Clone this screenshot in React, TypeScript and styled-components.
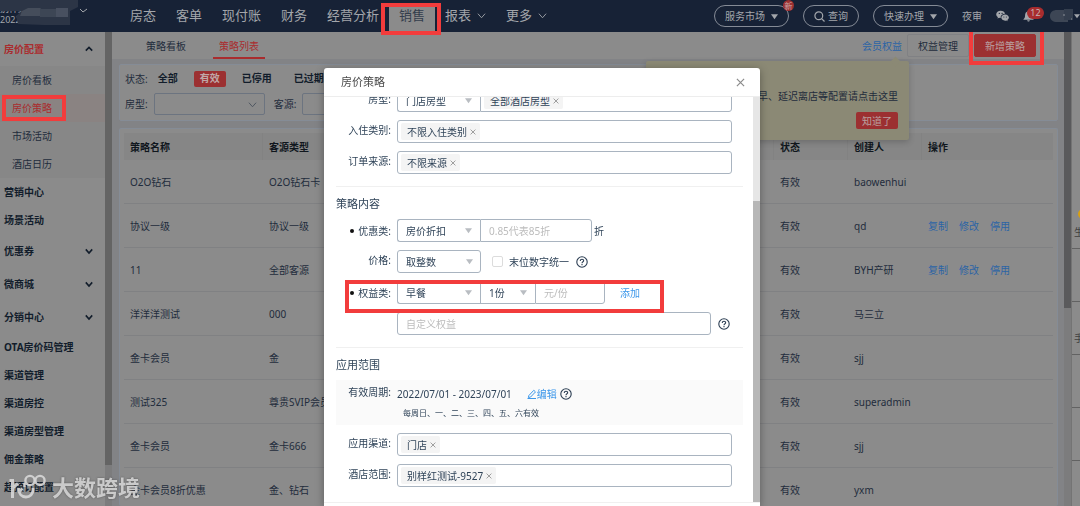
import React from 'react';
import styled, { createGlobalStyle, css } from 'styled-components';

const c = {
  surface: '#8b8b8b',
  canvas: '#828386',
  navy: '#172236',
  navText: '#a3a6ab',
  ink: '#1f2c3c',
  inkStrong: '#121d2b',
  red: '#9c3031',
  redText: '#a92c2e',
  link: '#2b64a6',
  mark: '#f23c3c',
  popover: '#8b8975',
  formInk: '#2f4358',
  formLine: '#a9b4c0',
  formLink: '#3c97ea',
  hint: '#bcbcbc',
};

const GlobalStyle = createGlobalStyle`
  *, *::before, *::after { box-sizing: border-box; }
  html, body, #root { height: 100%; }
  body {
    margin: 0;
    overflow: hidden;
    background: ${c.canvas};
    color: ${c.ink};
    font: 10px/16px "Noto Sans", "Noto Sans CJK SC", sans-serif;
  }
  button, input, select { font: inherit; color: inherit; margin: 0; }
  button { cursor: pointer; }
  a { text-decoration: none; color: inherit; }
`;

const Page = styled.div`
  display: flex;
  flex-direction: column;
  height: 100vh;
`;

const Highlight = styled.span<{ $inset: string }>`
  position: absolute;
  inset: ${(p) => p.$inset};
  border: 4px solid ${c.mark};
  pointer-events: none;
  z-index: 5;
`;

/* ---------- top bar ---------- */

const TopBar = styled.header`
  display: flex;
  flex: none;
  height: 32px;
  background: ${c.navy};
  color: ${c.navText};
`;

const Account = styled.div`
  position: relative;
  width: 120px;
  padding-top: 3px;
  font-size: 9px;
  line-height: 11px;
  overflow: hidden;
  svg { position: absolute; left: 0; top: 0; }
`;

const Nav = styled.nav`
  display: flex;
  align-items: flex-end;
  font-size: 13px;
`;

const NavItem = styled.a<{ $active?: boolean }>`
  position: relative;
  display: flex;
  align-items: center;
  gap: 6px;
  height: 26px;
  padding: 0 10px 8px;
  line-height: 18px;
  ${(p) => p.$active && css`background: ${c.surface}; color: #333d4b;`}
`;

const Tools = styled.div`
  display: flex;
  align-items: center;
  margin-left: auto;
`;

const Pill = styled.button<{ $tight?: boolean }>`
  position: relative;
  display: flex;
  align-items: center;
  gap: ${(p) => (p.$tight ? 3 : 6)}px;
  height: 22px;
  margin-right: 14px;
  padding: 0 10px;
  border: 1px solid #858b96;
  border-radius: 11px;
  background: none;
`;

const NewBadge = styled.span`
  position: absolute;
  right: -6px;
  top: -6px;
  width: 11px;
  height: 11px;
  border-radius: 50%;
  background: ${c.red};
  color: #c9a5a5;
  font-size: 8px;
  line-height: 11px;
  text-align: center;
`;

const ToolButton = styled.button<{ $last?: boolean }>`
  position: relative;
  display: flex;
  align-items: center;
  padding: 0;
  border: 0;
  background: none;
  margin-right: ${(p) => (p.$last ? 16 : 14)}px;
`;

const Count = styled.span`
  position: absolute;
  left: 4px;
  top: -3px;
  width: 17px;
  height: 12px;
  border-radius: 6px;
  background: #a82c2e;
  color: #c7b3b3;
  font-size: 9px;
  line-height: 12px;
  text-align: center;
`;

/* ---------- frame ---------- */

const Frame = styled.div`
  display: grid;
  grid-template-columns: 105px 7px minmax(0, 1fr) 7px 9px;
  flex: 1;
  min-height: 0;
`;

const Rail = styled.div<{ $thumb: string; $color: string }>`
  background: #7c7c7d;
  &::before {
    content: '';
    display: block;
    height: ${(p) => p.$thumb};
    background: ${(p) => p.$color};
  }
`;

const Side = styled.aside`
  overflow: hidden;
  background: ${c.surface};
`;

const SideLink = styled.a<{ $tall?: boolean; $open?: boolean }>`
  display: flex;
  align-items: center;
  justify-content: space-between;
  height: ${(p) => (p.$open ? 34 : p.$tall ? 33 : 28)}px;
  padding: 0 12px 0 4px;
  font-weight: 700;
  color: ${(p) => (p.$open ? c.redText : c.inkStrong)};
  svg { color: ${c.inkStrong}; }
`;

const SubMenu = styled.div`
  background: #878787;
`;

const SubLink = styled.a<{ $active?: boolean }>`
  position: relative;
  display: flex;
  align-items: center;
  height: 28px;
  padding-left: 12px;
  ${(p) => p.$active && css`color: ${c.redText}; background: #8a8382;`}
`;

const Main = styled.main`
  display: flex;
  flex-direction: column;
  min-width: 0;
  overflow: hidden;
`;

const TabBar = styled.div`
  display: flex;
  align-items: center;
  flex: none;
  height: 27px;
  padding: 0 28px;
  background: ${c.surface};
`;

const Tab = styled.a<{ $active?: boolean }>`
  height: 27px;
  margin-right: 21px;
  padding: 0 6px;
  line-height: 28px;
  border-bottom: 2px solid transparent;
  ${(p) => p.$active && css`color: ${c.redText}; border-color: ${c.redText};`}
`;

const Actions = styled.div`
  position: relative;
  display: flex;
  align-items: center;
  gap: 5px;
  margin-left: auto;
`;

const Action = styled.button<{ $primary?: boolean }>`
  position: relative;
  height: 23px;
  padding: 0 10px;
  border: 1px solid ${(p) => (p.$primary ? c.red : '#808184')};
  border-radius: 2px;
  background: ${(p) => (p.$primary ? c.red : 'none')};
  color: ${(p) => (p.$primary ? '#b9a0a0' : c.ink)};
`;

const MemberLink = styled.a`
  color: ${c.link};
`;

const Popover = styled.div`
  position: absolute;
  right: 127px;
  top: 27px;
  display: flex;
  flex-direction: column;
  align-items: flex-end;
  justify-content: flex-end;
  gap: 8px;
  width: 263px;
  height: 79px;
  padding: 11px;
  border-radius: 2px;
  background: ${c.popover};
  box-shadow: 0 2px 6px rgba(0, 0, 0, 0.2);
  z-index: 2;
  &::before {
    content: '';
    position: absolute;
    right: 10px;
    top: -3px;
    width: 7px;
    height: 7px;
    background: ${c.popover};
    transform: rotate(45deg);
  }
`;

const Confirm = styled.button`
  height: 17px;
  padding: 0 6px;
  border: 0;
  border-radius: 2px;
  background: ${c.red};
  color: #b9a0a0;
  line-height: 16px;
`;

const Card = styled.section`
  margin: 0 6px 7px 7px;
  border: 1px solid #858c96;
  border-radius: 2px;
  background: ${c.surface};
`;

const Filters = styled(Card)`
  flex: none;
  margin-top: 5px;
  padding: 5px;
`;

const FilterRow = styled.div`
  display: flex;
  align-items: center;
  height: 17px;
  margin-bottom: 6px;
  & + & { height: 22px; margin-bottom: 0; }
`;

const StatusGroup = styled.div`
  display: flex;
  gap: 5px;
  margin-left: 4px;
`;

const Status = styled.button<{ $active?: boolean }>`
  height: 16px;
  margin-right: 5px;
  padding: 0 6px;
  border: 0;
  border-radius: 2px;
  background: ${(p) => (p.$active ? c.red : 'none')};
  color: ${(p) => (p.$active ? '#c0a8a8' : c.inkStrong)};
  font-weight: 700;
  line-height: 15px;
`;

const FilterLabel = styled.label`
  display: flex;
  align-items: center;
  gap: 6px;
  margin-right: 9px;
`;

const Picker = styled.span`
  display: flex;
  align-items: center;
  width: 111px;
  color: #4a525e;
  select {
    flex: 1;
    min-width: 0;
    height: 22px;
    padding: 0 8px;
    border: 1px solid #6c7480;
    border-radius: 2px;
    background: none;
    appearance: none;
  }
  svg { flex: none; margin-left: -17px; margin-right: 8px; pointer-events: none; }
`;

const TableCard = styled(Card)`
  flex: 1;
  min-height: 0;
  margin-bottom: 0;
  padding: 4px;
  border-bottom: 0;
  overflow: hidden;
`;

const Table = styled.table`
  width: 100%;
  table-layout: fixed;
  border-collapse: separate;
  border-spacing: 0;
  th, td { padding: 0 6px; text-align: left; white-space: nowrap; }
  th { height: 27px; background: #868686; border-right: 1px solid #828282; color: #10161d; font-weight: 700; }
  th:last-child { border-right: 0; }
  td { height: 44px; border-bottom: 1px solid #808183; }
`;

const Operations = styled.span`
  display: flex;
  gap: 11px;
  a { color: ${c.link}; }
`;

const Strip = styled.div`
  overflow: hidden;
  border-left: 1px solid #747474;
  background: ${c.surface};
  color: #3f3f3f;
`;

const StripCell = styled.div<{ $first?: boolean }>`
  display: flex;
  flex-direction: column;
  justify-content: ${(p) => (p.$first ? 'flex-end' : 'center')};
  gap: 5px;
  height: ${(p) => (p.$first ? 217 : 53)}px;
  padding: ${(p) => (p.$first ? '0 0 8px 2px' : '20px 0 0 2px')};
  border-bottom: 1px solid #626262;
  svg { margin-left: 4px; }
`;

/* ---------- dialog ---------- */

const Overlay = styled.div`
  position: fixed;
  inset: 68px 0 0;
  display: flex;
  justify-content: center;
  padding-left: 4px;
  pointer-events: none;
  z-index: 4;
`;

const Dialog = styled.div`
  display: flex;
  flex-direction: column;
  width: 436px;
  border-radius: 3px 3px 0 0;
  background: #fff;
  color: ${c.formInk};
  box-shadow: 0 2px 8px rgba(0, 0, 0, 0.35);
  pointer-events: auto;
`;

const DialogHead = styled.div`
  display: flex;
  flex: none;
  align-items: center;
  justify-content: space-between;
  height: 29px;
  padding: 0 15px 0 17px;
  border-bottom: 1px solid #ededed;
  color: #4a4a4a;
  h2 { margin: 0; font-size: 11px; font-weight: 400; }
`;

const Bare = styled.button`
  display: inline-flex;
  align-items: center;
  padding: 0;
  border: 0;
  background: none;
`;

const DialogBody = styled.div`
  display: grid;
  grid-template-columns: minmax(0, 1fr) 7px;
  flex: 1;
  min-height: 0;
  overflow: hidden;
`;

const DialogRail = styled.div`
  padding-top: 104px;
  background: #e6e6e6;
  &::before { content: ''; display: block; height: 100%; background: #b7b7b7; }
`;

const DialogFoot = styled.div`
  flex: none;
  height: 4px;
  border-top: 1px solid #f0f0f0;
`;

const Form = styled.form`
  margin-top: -8px;
  padding: 0 10px 0 12px;
`;

const Group = styled.fieldset`
  display: flex;
  flex-direction: column;
  gap: 8px;
  min-width: 0;
  margin: 0;
  padding: 0 0 12px;
  border: 0;
  & + & { border-top: 1px solid #f0f0f0; }
`;

const GroupTitle = styled.h3`
  margin: 9px 0 -1px;
  font-size: 11px;
  font-weight: 400;
  line-height: 16px;
`;

const Line = styled.div`
  position: relative;
  display: grid;
  grid-template-columns: 55px minmax(0, 1fr);
  column-gap: 6px;
  height: 23px;
  padding-right: 11px;
`;

const Label = styled.label<{ $dot?: boolean }>`
  display: flex;
  align-items: center;
  justify-content: flex-end;
  gap: 4px;
  line-height: 18px;
  padding-bottom: 4px;
  ${(p) => p.$dot && css`
    padding-bottom: 0;
    &::before {
      content: '';
      width: 4px;
      height: 4px;
      border-radius: 50%;
      background: #111;
    }
  `}
`;

const Controls = styled.div`
  display: flex;
  align-items: center;
`;

const joined = css<{ $join?: 'left' | 'mid' | 'right' }>`
  border: 1px solid ${c.formLine};
  border-radius: ${(p) =>
    p.$join === 'left' ? '3px 0 0 3px' : p.$join === 'mid' ? '0' : p.$join === 'right' ? '0 3px 3px 0' : '3px'};
`;

const SelectWrap = styled.span<{ $w: number; $join?: 'left' | 'mid' | 'right' }>`
  display: flex;
  flex: none;
  align-items: center;
  width: ${(p) => p.$w}px;
  height: 23px;
  select {
    width: 100%;
    height: 23px;
    padding: 0 8px;
    border: 1px solid ${c.formLine};
    border-right-width: ${(p) => (p.$join ? 0 : 1)}px;
    border-radius: ${(p) => (p.$join === 'left' ? '3px 0 0 3px' : p.$join === 'mid' ? '0' : '3px')};
    background: #fff;
    appearance: none;
  }
  svg { flex: none; margin-left: -15px; margin-right: 8px; pointer-events: none; }
`;

const TextInput = styled.input<{ $w: number; $join?: 'left' | 'mid' | 'right' }>`
  width: ${(p) => p.$w}px;
  height: 23px;
  padding: 0 8px;
  background: #fff;
  ${joined}
  &::placeholder { color: ${c.hint}; opacity: 1; }
`;

const TagBox = styled.div<{ $join?: 'left' | 'mid' | 'right' }>`
  display: flex;
  flex: 1;
  align-items: center;
  height: 23px;
  padding: 0 3px;
  ${joined}
`;

const TagItem = styled.span`
  display: flex;
  align-items: center;
  gap: 3px;
  height: 17px;
  padding: 0 4px 0 6px;
  border-radius: 2px;
  background: #f4f4f4;
`;

const Unit = styled.span`
  margin-left: 2px;
`;

const Check = styled.label`
  display: flex;
  align-items: center;
  gap: 6px;
  margin: 0 7px 0 11px;
  input {
    width: 11px;
    height: 11px;
    border: 1px solid #dcdcdc;
    border-radius: 2px;
    background: #fff;
    appearance: none;
  }
`;

const TextLink = styled.a`
  display: flex;
  align-items: center;
  color: ${c.formLink};
`;

const AddLink = styled(TextLink)`
  margin-left: 15px;
`;

const HelpButton = styled(Bare)<{ $gap?: boolean }>`
  margin-left: ${(p) => (p.$gap ? 7 : 0)}px;
`;

const Period = styled.div`
  height: 45px;
  padding-top: 3px;
  background: #fafafa;
`;

const PeriodLine = styled(Line)`
  height: 22px;
  a { margin: 0 3px 0 15px; }
`;

const PeriodNote = styled.p`
  margin: 0;
  padding-left: 67px;
  font-size: 8px;
  line-height: 16px;
`;

/* ---------- watermark ---------- */

const Watermark = styled.div`
  position: fixed;
  left: 8px;
  bottom: 4px;
  display: flex;
  align-items: center;
  gap: 5px;
  color: rgba(215, 215, 215, 0.9);
  font-size: 22px;
  font-weight: 700;
  line-height: 30px;
  text-shadow: 0 0 2px rgba(70, 70, 70, 0.8);
  z-index: 6;
`;

/* ---------- icons ---------- */

const Chevron = ({ up, size = 9, weight = 1 }: { up?: boolean; size?: number; weight?: number }) => (
  <svg width={size} height={size} viewBox="0 0 10 10" fill="none" stroke="currentColor" strokeWidth={weight}>
    <path d={up ? 'M1 7 5 3 9 7' : 'M1 3 5 7.5 9 3'} />
  </svg>
);

const Caret = ({ color = 'currentColor', size = 7 }: { color?: string; size?: number }) => (
  <svg width={size} height={size} viewBox="0 0 8 8" fill={color}>
    <path d="M0 1.5h8L4 7z" />
  </svg>
);

const Cross = ({ size, color }: { size: number; color: string }) => (
  <svg width={size} height={size} viewBox="0 0 10 10" stroke={color} strokeWidth="1.3">
    <path d="M1 1 9 9M9 1 1 9" />
  </svg>
);

const HelpIcon = () => (
  <svg width="12" height="12" viewBox="0 0 12 12" fill="none" stroke="#2b3d52" strokeWidth="1.1">
    <circle cx="6" cy="6" r="5.2" />
    <path d="M4.3 4.9C4.3 3.8 5 3.2 6 3.2s1.7.6 1.7 1.5C7.7 5.8 6 5.8 6 7.2M6 8.1v1.1" />
  </svg>
);

const EditIcon = () => (
  <svg width="10" height="10" viewBox="0 0 10 10" fill="none" stroke="currentColor">
    <path d="M1.8 6.6 6.8 1.3 8.5 2.9 3.5 8.1 1.4 8.5zM0.5 9.5h8.500" />
  </svg>
);

const SearchIcon = () => (
  <svg width="11" height="11" viewBox="0 0 11 11" fill="none" stroke="currentColor" strokeWidth="1.2">
    <circle cx="4.8" cy="4.8" r="3.9" />
    <path d="M7.6 7.6 10.5 10.5" />
  </svg>
);

const WechatIcon = () => (
  <svg width="13" height="12" viewBox="0 0 13 12" fill="currentColor">
    <path d="M4.700.7C2.200.7.2 2.300.2 4.300c0 1.200.7 2.200 1.700 2.900L1.500 8.600l1.600-.9c.6.200 1 .2 1.600.2C4.400 5.500 6.400 3.700 9.100 3.700 8.700 1.900 6.900.7 4.700.7z" />
    <path d="M12.900 7.600c0-1.700-1.700-3.100-3.800-3.100S5.300 5.900 5.300 7.600s1.700 3.100 3.800 3.100c.5 0 .9-.1 1.300-.2l1.300.8-.4-1.300c1-.6 1.600-1.400 1.600-2.400z" />
    <g fill={c.navy}>
      <circle cx="3.3" cy="3.4" r=".6" />
      <circle cx="6.1" cy="3.4" r=".6" />
      <circle cx="7.9" cy="6.9" r=".5" />
      <circle cx="10.3" cy="6.9" r=".5" />
    </g>
  </svg>
);

const BellIcon = () => (
  <svg width="11" height="12" viewBox="0 0 11 12" fill="currentColor">
    <path d="M5.500 0.500c.6 0 .9.400.9.900 1.700.5 2.500 1.900 2.500 3.600 0 2.500.6 3.500 1.600 4.200v.5H.5v-.5C1.500 8.500 2.100 7.500 2.100 5c0-1.700.8-3.100 2.500-3.600 0-.5.3-.9.9-.9zM4.200 10.300h2.600c0 .8-.6 1.300-1.300 1.300s-1.300-.5-1.300-1.300z" />
  </svg>
);

const AccountMask = () => (
  <svg width="90" height="26" viewBox="0 0 90 26">
    <path d="M0 0h78v7l-8 4v14H44l-26-1-2-8 6-5H0z" fill="#2c3546" />
    <path d="M28 8h12l4 3v5H20l2-5z" fill="#454d5b" />
    <path d="M56 8h12v9H56z" fill="#485060" />
    <path d="M40 9h16v8H40z" fill="#3d4655" />
    <path d="M80 9l3 3 4-3" fill="none" stroke={c.navText} />
  </svg>
);

const UserMask = () => (
  <svg width="24" height="16" viewBox="0 0 24 16">
    <path d="M0 8C0 4 3 2 7 2h11v12H7C3 14 0 12 0 8z" fill="#3d4655" />
    <path d="M14 1h9v11h-9z" fill="#343e4e" />
    <path d="M13 7h2M21 11h1" stroke="#8a8f98" />
  </svg>
);

const Logo = () => (
  <svg width="39" height="26" viewBox="0 0 39 26" fill="none" stroke="currentColor">
    <path d="M1.500 6.500h3v17.500M4.500 14l5.500-4.500" strokeWidth="3" />
    <path d="M10.500 14c0 6 3.500 9 7.500 9s7-3 7-7v-2M10.500 18l4-3.500" strokeWidth="2.800" />
    <circle cx="22" cy="6.500" r="4.600" strokeWidth="2.400" />
    <circle cx="32" cy="6.500" r="4.600" strokeWidth="2.400" />
    <path d="M16.500 9v4" strokeWidth="2.400" />
  </svg>
);

/* ---------- data ---------- */

const rows = [
  { name: 'O2O钻石', source: 'O2O钻石卡', by: 'baowenhui' },
  { name: '协议一级', source: '协议一级', by: 'qd', ops: true },
  { name: '11', source: '全部客源', by: 'BYH产研', ops: true },
  { name: '洋洋洋测试', source: '000', by: '马三立' },
  { name: '金卡会员', source: '金', by: 'sjj' },
  { name: '测试325', source: '尊贵SVIP会员', by: 'superadmin' },
  { name: '金卡会员', source: '金卡666', by: 'sjj' },
  { name: '金卡会员8折优惠', source: '金、钻石', by: 'yxm' },
];

const sideGroups = ['优惠券', '微商城', '分销中心'];
const sidePages = ['OTA房价码管理', '渠道管理', '渠道房控', '渠道房型管理', '佣金策略', '超预订配置'];

/* ---------- parts ---------- */

type Join = 'left' | 'mid' | 'right';

const SelectBox = ({ id, value, w, join, label }: { id?: string; value: string; w: number; join?: Join; label?: string }) => (
  <SelectWrap $w={w} $join={join}>
    <select id={id} aria-label={label} defaultValue={value}>
      <option>{value}</option>
    </select>
    <Caret color="#b9bdc2" />
  </SelectWrap>
);

const Tag = ({ text }: { text: string }) => (
  <TagItem>
    {text}
    <Bare type="button" aria-label={`移除${text}`}>
      <Cross size={6} color="#858585" />
    </Bare>
  </TagItem>
);

const TagField = ({ label, tag }: { label: string; tag: string }) => (
  <Line>
    <Label as="span">{label}:</Label>
    <TagBox>
      <Tag text={tag} />
    </TagBox>
  </Line>
);

const Help = ({ gap }: { gap?: boolean }) => (
  <HelpButton type="button" aria-label="说明" $gap={gap}>
    <HelpIcon />
  </HelpButton>
);

const PolicyDialog = () => (
  <Overlay>
    <Dialog role="dialog" aria-labelledby="dialog-title">
      <DialogHead>
        <h2 id="dialog-title">房价策略</h2>
        <Bare type="button" aria-label="关闭">
          <Cross size={9} color="#8a8a8a" />
        </Bare>
      </DialogHead>
      <DialogBody>
        <Form>
          <Group>
            <Line>
              <Label htmlFor="room">房型:</Label>
              <Controls>
                <SelectBox id="room" value="门店房型" w={83} join="left" />
                <TagBox $join="right">
                  <Tag text="全部酒店房型" />
                </TagBox>
              </Controls>
            </Line>
            <TagField label="入住类别" tag="不限入住类别" />
            <TagField label="订单来源" tag="不限来源" />
          </Group>
          <Group>
            <GroupTitle>策略内容</GroupTitle>
            <Line>
              <Label htmlFor="discount" $dot>优惠类:</Label>
              <Controls>
                <SelectBox id="discount" value="房价折扣" w={83} join="left" />
                <TextInput $w={112} $join="right" placeholder="0.85代表85折" aria-label="折扣" />
                <Unit>折</Unit>
              </Controls>
            </Line>
            <Line>
              <Label htmlFor="price">价格:</Label>
              <Controls>
                <SelectBox id="price" value="取整数" w={84} />
                <Check>
                  <input type="checkbox" />
                  末位数字统一
                </Check>
                <Help />
              </Controls>
            </Line>
            <Line>
              <Label htmlFor="benefit" $dot>权益类:</Label>
              <Controls>
                <SelectBox id="benefit" value="早餐" w={83} join="left" />
                <SelectBox value="1份" w={55} join="mid" label="份数" />
                <TextInput $w={70} $join="right" placeholder="元/份" aria-label="单价" />
                <AddLink href="#add">添加</AddLink>
              </Controls>
              <Highlight $inset="-1px 79px -9px 9px" />
            </Line>
            <Line>
              <span />
              <Controls>
                <TextInput $w={314} placeholder="自定义权益" aria-label="自定义权益" />
                <Help gap />
              </Controls>
            </Line>
          </Group>
          <Group>
            <GroupTitle>应用范围</GroupTitle>
            <Period>
              <PeriodLine>
                <Label as="span">有效周期:</Label>
                <Controls>
                  2022/07/01 - 2023/07/01
                  <TextLink href="#edit">
                    <EditIcon />
                    编辑
                  </TextLink>
                  <Help />
                </Controls>
              </PeriodLine>
              <PeriodNote>每周日、一、二、三、四、五、六有效</PeriodNote>
            </Period>
            <TagField label="应用渠道" tag="门店" />
            <TagField label="酒店范围" tag="别样红测试-9527" />
          </Group>
        </Form>
        <DialogRail />
      </DialogBody>
      <DialogFoot />
    </Dialog>
  </Overlay>
);

export default function App() {
  return (
    <Page>
      <GlobalStyle />
      <TopBar>
        <Account>
          别样红
          <br />
          2022
          <AccountMask />
        </Account>
        <Nav>
          {['房态', '客单', '现付账', '财务', '经营分析'].map((t) => (
            <NavItem key={t} href="#nav">{t}</NavItem>
          ))}
          <NavItem href="#sales" $active>
            销售
            <Highlight $inset="-3px -6px -3px -8px" />
          </NavItem>
          <NavItem href="#reports">报表 <Chevron /></NavItem>
          <NavItem href="#more">更多 <Chevron /></NavItem>
        </Nav>
        <Tools>
          <Pill>
            服务市场 <Caret />
            <NewBadge>新</NewBadge>
          </Pill>
          <Pill $tight>
            <SearchIcon /> 查询
          </Pill>
          <Pill>
            快速办理 <Caret />
          </Pill>
          <ToolButton>夜审</ToolButton>
          <ToolButton aria-label="微信">
            <WechatIcon />
          </ToolButton>
          <ToolButton aria-label="通知" $last>
            <BellIcon />
            <Count>12</Count>
          </ToolButton>
          <UserMask />
          <Caret size={6} />
        </Tools>
      </TopBar>
      <Frame>
        <Side>
          <SideLink href="#price" $tall $open>
            房价配置 <Chevron up size={8} weight={2} />
          </SideLink>
          <SubMenu>
            <SubLink href="#board">房价看板</SubLink>
            <SubLink href="#policy" $active>
              房价策略
              <Highlight $inset="1px 39px 1px 2px" />
            </SubLink>
            <SubLink href="#market">市场活动</SubLink>
            <SubLink href="#calendar">酒店日历</SubLink>
          </SubMenu>
          <SideLink href="#marketing">营销中心</SideLink>
          <SideLink href="#scene">场景活动</SideLink>
          {sideGroups.map((t) => (
            <SideLink key={t} href="#group" $tall>
              {t} <Chevron size={8} weight={2} />
            </SideLink>
          ))}
          {sidePages.map((t) => (
            <SideLink key={t} href="#page">{t}</SideLink>
          ))}
        </Side>
        <Rail $thumb="433px" $color="#646464" />
        <Main>
          <TabBar>
            <Tab href="#board">策略看板</Tab>
            <Tab href="#list" $active>策略列表</Tab>
            <Actions>
              <MemberLink href="#member">会员权益</MemberLink>
              <Action>权益管理</Action>
              <Action $primary>
                新增策略
                <Highlight $inset="-7px -9px -9px -6px" />
              </Action>
              <Popover>
                <span>含早、延迟离店等配置请点击这里</span>
                <Confirm>知道了</Confirm>
              </Popover>
            </Actions>
          </TabBar>
          <Filters>
            <FilterRow>
              状态:
              <StatusGroup>
                <Status>全部</Status>
                <Status $active>有效</Status>
                <Status>已停用</Status>
                <Status>已过期</Status>
              </StatusGroup>
            </FilterRow>
            <FilterRow>
              {['房型', '客源'].map((t) => (
                <FilterLabel key={t}>
                  {t}:
                  <Picker>
                    <select />
                    <Chevron />
                  </Picker>
                </FilterLabel>
              ))}
            </FilterRow>
          </Filters>
          <TableCard>
            <Table>
              <colgroup>
                <col width="139" />
                <col />
                <col width="74" />
                <col width="74" />
                <col width="131" />
              </colgroup>
              <thead>
                <tr>
                  <th>策略名称</th>
                  <th>客源类型</th>
                  <th>状态</th>
                  <th>创建人</th>
                  <th>操作</th>
                </tr>
              </thead>
              <tbody>
                {rows.map((r, i) => (
                  <tr key={i}>
                    <td>{r.name}</td>
                    <td>{r.source}</td>
                    <td>有效</td>
                    <td>{r.by}</td>
                    <td>
                      {r.ops && (
                        <Operations>
                          <a href="#copy">复制</a>
                          <a href="#change">修改</a>
                          <a href="#stop">停用</a>
                        </Operations>
                      )}
                    </td>
                  </tr>
                ))}
              </tbody>
            </Table>
          </TableCard>
        </Main>
        <Rail $thumb="276px" $color="#5a5a5c" />
        <Strip>
          <StripCell $first>
            <svg width="10" height="10" viewBox="0 0 10 10">
              <circle cx="5" cy="5" r="5" fill="#d8a012" />
            </svg>
            生
          </StripCell>
          <StripCell />
          <StripCell>手</StripCell>
          <StripCell />
          <StripCell />
        </Strip>
      </Frame>
      <PolicyDialog />
      <Watermark>
        <Logo />
        <span>大数跨境</span>
      </Watermark>
    </Page>
  );
}
